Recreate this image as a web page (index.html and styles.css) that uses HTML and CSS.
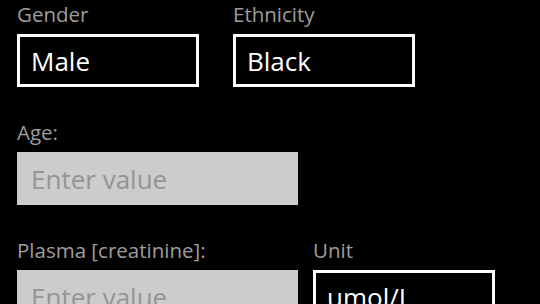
FILE: index.html
```html
<!DOCTYPE html>
<html lang="en">
<head>
    <meta charset="UTF-8">
    <meta name="viewport" content="width=device-width, initial-scale=1.0">
    <title>eGFR Calculator</title>
    <link rel="stylesheet" href="styles.css">
</head>
<body>

    <div class="form">
        <div class="row">
            <div class="field short">
                <label>Gender</label>
                <div class="picker">Male</div>
            </div>
            <div class="field short">
                <label>Ethnicity</label>
                <div class="picker">Black</div>
            </div>
        </div>

        <div class="row">
            <div class="field wide">
                <label>Age:</label>
                <div class="textbox">Enter value</div>
            </div>
        </div>

        <div class="row tight">
            <div class="field wide">
                <label>Plasma [creatinine]:</label>
                <div class="textbox">Enter value</div>
            </div>
            <div class="field short">
                <label>Unit</label>
                <div class="picker">umol/L</div>
            </div>
        </div>
    </div>

</body>
</html>
```

FILE: styles.css
```css
body {
    margin: 0;
    background-color: #000;
    font-family: "Open Sans", "Noto Sans", sans-serif;
    overflow: hidden;
}
.form {
    padding-left: 17px;
}
.row {
    display: flex;
    gap: 34px;
    margin-bottom: 31px;
}
.row.tight {
    gap: 15px;
}
.field {
    display: flex;
    flex-direction: column;
}
.field.short {
    width: 182px;
}
.field.wide {
    width: 281px;
}
.field label {
    color: #9d9d9d;
    font-size: 20.5px;
    line-height: 26px;
    padding-top: 1px;
    margin-bottom: 7px;
}
.picker,
.textbox {
    box-sizing: border-box;
    height: 53px;
    display: flex;
    align-items: center;
    font-size: 26px;
    padding-left: 11px;
}
.picker {
    border: 3px solid #fff;
    color: #fff;
    background: #000;
}
.textbox {
    border: 3px solid #cccccc;
    background: #cccccc;
    color: #959595;
}
```
